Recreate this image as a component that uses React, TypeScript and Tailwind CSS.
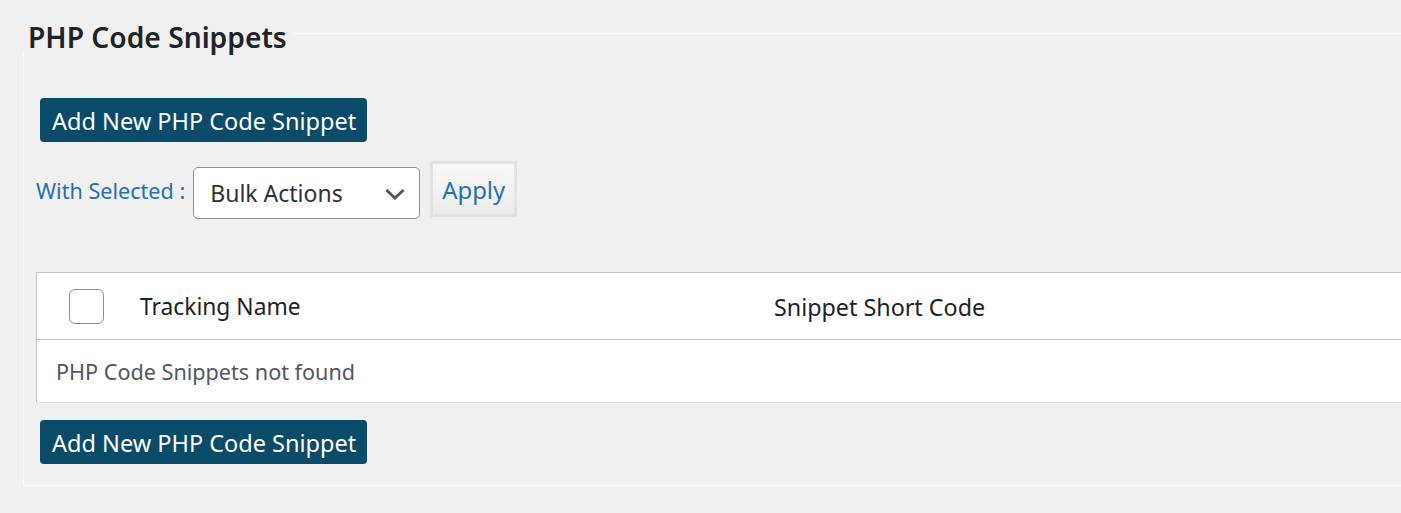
const font = { fontFamily: '"Noto Sans", "Open Sans", sans-serif' };

function AddButton() {
  return (
    <button className="h-[44px] pl-[12px] pr-[11px] pt-[3px] rounded-[4px] bg-[#0a4b69] text-white text-[23.5px] leading-none whitespace-nowrap">
      Add New PHP Code Snippet
    </button>
  );
}

export default function App() {
  return (
    <div className="w-[1401px] h-[513px] overflow-hidden bg-[#f0f0f1]" style={font}>
      <div className="pt-[15px] pl-[23px]">
        <fieldset className="w-[1500px] h-[471px] border border-[#fbfbfb] pl-[16px] pr-0 m-0">
          <legend className="ml-[-18px] px-[6px] pt-[8px] text-[28.2px] font-semibold text-[#1d2327] leading-[28px]">
            PHP Code Snippets
          </legend>

          <div className="pt-[47px]">
            <AddButton />
          </div>

          <div className="flex items-start mt-[19px] ml-[-4px]">
            <span className="text-[21.6px] leading-[28px] mt-[16px] text-[#2271b1] mr-[8px] whitespace-nowrap">With Selected :</span>
            <div className="w-[227px] h-[52px] rounded-[5px] border border-[#8c8f94] bg-white flex items-center justify-between pl-[16px] pr-[13px] mt-[6px]">
              <span className="text-[23px] text-[#2c3338]">Bulk Actions</span>
              <svg width="22" height="14" viewBox="0 0 22 14" fill="none" className="mt-[2px]">
                <path d="M2.5 3 L11 11 L19.5 3" stroke="#50575e" strokeWidth="3" />
              </svg>
            </div>
            <button className="ml-[10px] w-[87px] h-[56px] border-[3px] border-[#e2e2e2] bg-gradient-to-b from-[#f8f8f8] to-[#ececec] text-[23.9px] leading-none pt-[2px] text-[#2271b1]">
              Apply
            </button>
          </div>

          <div className="mt-[53px] ml-[-4px] bg-white border-t border-l border-[#c3c4c7] shadow-[0_1px_1px_rgba(0,0,0,0.06)]">
            <div className="h-[67px] flex items-center border-b border-[#c3c4c7]">
              <div className="w-[103px] pl-[32px]">
                <div className="w-[35px] h-[35px] rounded-[6px] border border-[#8c8f94] bg-white" />
              </div>
              <div className="w-[634px] pt-[3px] text-[22.8px] text-[#1d2327]">Tracking Name</div>
              <div className="pt-[3px] text-[23.3px] text-[#1d2327]">Snippet Short Code</div>
            </div>
            <div className="h-[62px] flex items-center pl-[19px] pt-[2px] text-[21.6px] text-[#50575e]">
              PHP Code Snippets not found
            </div>
          </div>

          <div className="mt-[18px]">
            <AddButton />
          </div>
        </fieldset>
      </div>
    </div>
  );
}
